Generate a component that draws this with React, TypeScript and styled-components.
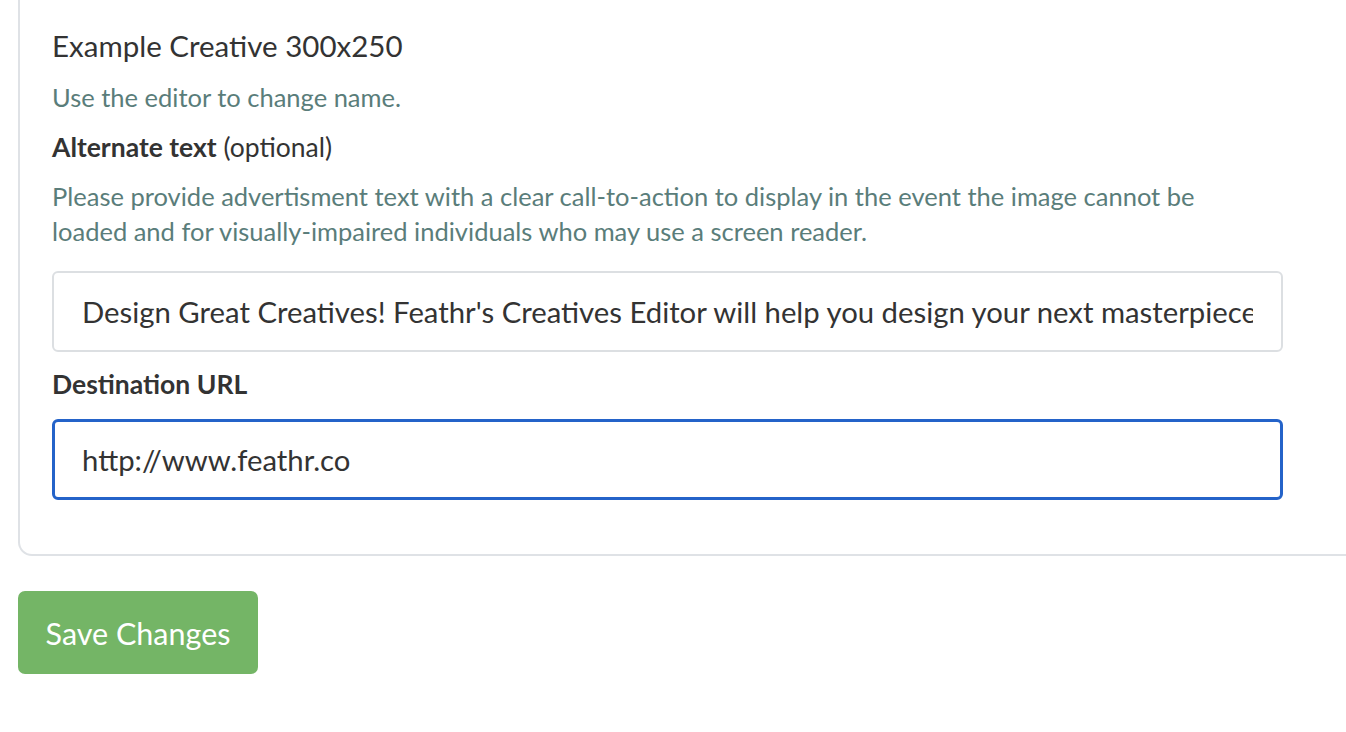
import React from 'react';
import styled, { createGlobalStyle } from 'styled-components';

const Global = createGlobalStyle`
  body { margin: 0; background: #fff; font-family: Lato, "Open Sans", sans-serif; overflow: hidden; }
`;

const Page = styled.div`
  padding: 0 0 0 18px;
`;

const Card = styled.div`
  width: calc(100% + 20px);
  box-sizing: border-box;
  border: 2px solid #dfe2e6;
  border-top: none;
  border-radius: 0 0 0 14px;
  padding: 26px 0 54px 32px;
`;

const Title = styled.div`
  font-size: 29.5px;
  color: #333;
  line-height: 40px;
`;

const Hint = styled.div`
  font-size: 25.5px;
  color: #5a7d7a;
  line-height: 35px;
  margin-top: 14px;
  max-width: 1190px;
`;

const Label = styled.div`
  font-size: 26.5px;
  color: #333;
  margin-top: 14px;
  line-height: 36px;
  b { font-weight: 700; }
`;

const Desc = styled(Hint)`
  margin-top: 14px;
`;

const Input = styled.input<{ $focus?: boolean }>`
  display: block;
  width: 1231px;
  height: 81px;
  box-sizing: border-box;
  margin-top: ${p => (p.$focus ? '17px' : '22px')};
  border: ${p => (p.$focus ? '3px solid #2463c9' : '2px solid #dcdfe2')};
  border-radius: 6px;
  padding: 0 ${p => (p.$focus ? '27px' : '28px')};
  font-family: Lato, sans-serif;
  font-size: 29.3px;
  color: #333;
  outline: none;
`;

const Button = styled.button`
  margin-top: 35px;
  width: 240px;
  height: 83px;
  border: none;
  border-radius: 7px;
  background: #74b566;
  color: #fff;
  font-family: Lato, sans-serif;
  font-size: 30.5px;
`;

export default function App() {
  return (
    <Page>
      <Global />
      <Card>
        <Title>Example Creative 300x250</Title>
        <Hint>Use the editor to change name.</Hint>
        <Label><b>Alternate text</b> (optional)</Label>
        <Desc>
          Please provide advertisment text with a clear call-to-action to display in the event the image cannot be
          loaded and for visually-impaired individuals who may use a screen reader.
        </Desc>
        <Input readOnly value="Design Great Creatives! Feathr's Creatives Editor will help you design your next masterpiece" />
        <Label><b>Destination URL</b></Label>
        <Input $focus readOnly value="http://www.feathr.co" />
      </Card>
      <Button>Save Changes</Button>
    </Page>
  );
}
